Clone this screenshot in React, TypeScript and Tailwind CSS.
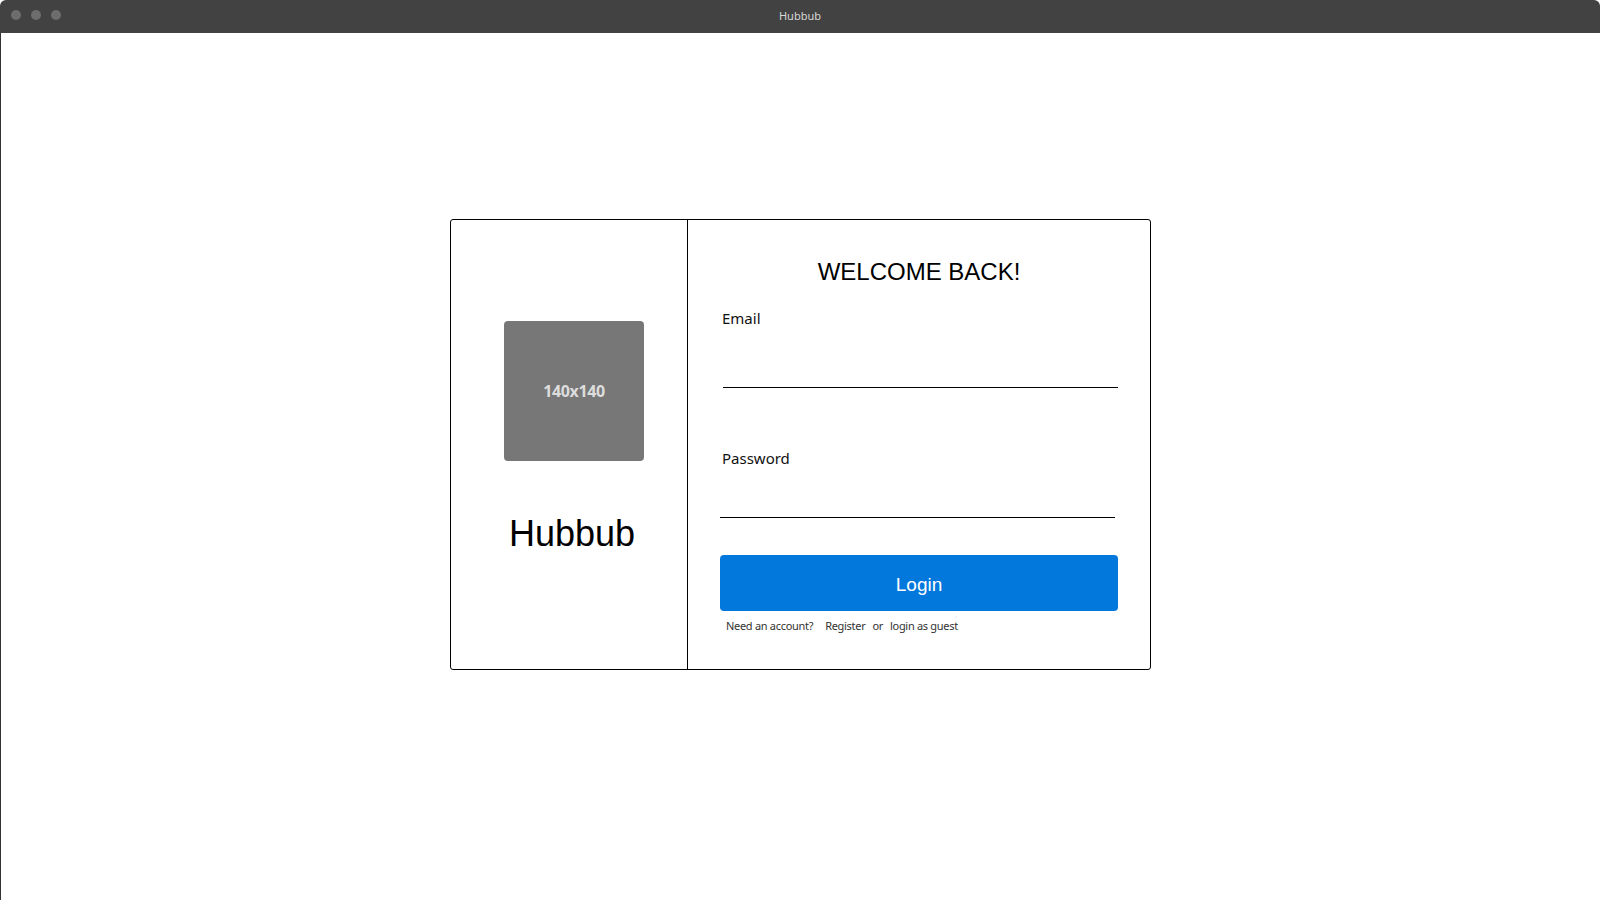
import React from "react";

export default function App() {
  return (
    <div className="w-[1600px] h-[900px] bg-white overflow-hidden">
      <div className="flex flex-col h-full rounded-t-[6px] overflow-hidden">
        {/* Title bar */}
        <div className="grid grid-cols-[1fr_auto_1fr] h-[33px] bg-[#424242] shrink-0">
          <div className="flex gap-[10px] pl-[11px] pt-[10px]">
            <span className="block w-[10px] h-[10px] rounded-full bg-[#6d6d6d]" />
            <span className="block w-[10px] h-[10px] rounded-full bg-[#6d6d6d]" />
            <span className="block w-[10px] h-[10px] rounded-full bg-[#6d6d6d]" />
          </div>
          <div
            className="pt-[10px] text-[11px] leading-none text-[#d8d8d8]"
            style={{ fontFamily: '"Noto Sans", sans-serif' }}
          >
            Hubbub
          </div>
          <div />
        </div>

        {/* Window body */}
        <div className="flex-1 border-l border-[#333333] flex justify-center items-start">
          <div className="mt-[186px] w-[701px] h-[451px] border border-black rounded-[3px] flex">
            {/* Left panel */}
            <div className="w-[237px] h-full border-r border-black flex flex-col items-center pt-[101px]">
              <div className="ml-[10px] w-[140px] h-[140px] rounded-[4px] bg-[#777777] flex items-center justify-center">
                <span
                  className="text-[16px] font-bold leading-none text-[#dddddd] tracking-[-0.4px]"
                  style={{ fontFamily: '"Noto Sans", sans-serif' }}
                >
                  140x140
                </span>
              </div>
              <div
                className="ml-[6px] mt-[55px] text-[36px] leading-none text-black"
                style={{ fontFamily: '"Liberation Sans", Arial, sans-serif' }}
              >
                Hubbub
              </div>
            </div>

            {/* Right panel */}
            <div className="flex-1 flex flex-col px-[32px] pt-[40px]">
              <h1
                className="text-center text-[24px] leading-none text-black"
                style={{ fontFamily: '"Liberation Sans", Arial, sans-serif' }}
              >
                WELCOME BACK!
              </h1>

              <div style={{ fontFamily: '"Noto Sans", sans-serif' }}>
                <label className="block mt-[27px] ml-[2px] text-[15px] leading-none text-[#111111]">
                  Email
                </label>
                <input
                  type="text"
                  className="block ml-[3px] w-[395px] h-[62px] border-b border-black bg-transparent outline-none"
                />

                <label className="block mt-[63px] ml-[2px] text-[15px] leading-none text-[#111111]">
                  Password
                </label>
                <input
                  type="password"
                  className="block w-[395px] h-[52px] border-b border-black bg-transparent outline-none"
                />
              </div>

              <button
                className="mt-[37px] w-full h-[56px] pt-[2px] rounded-[4px] bg-[#0277dc] text-white text-[19px] leading-none"
                style={{ fontFamily: '"Liberation Sans", Arial, sans-serif' }}
              >
                Login
              </button>

              <div
                className="mt-[9px] ml-[6px] flex text-[11px] leading-none text-[#333333] tracking-[-0.3px]"
                style={{ fontFamily: '"Noto Sans", sans-serif' }}
              >
                <span>Need an account?</span>
                <span className="ml-[12px]">Register</span>
                <span className="ml-[7px]">or</span>
                <span className="ml-[7px]">login as guest</span>
              </div>
            </div>
          </div>
        </div>
      </div>
    </div>
  );
}
